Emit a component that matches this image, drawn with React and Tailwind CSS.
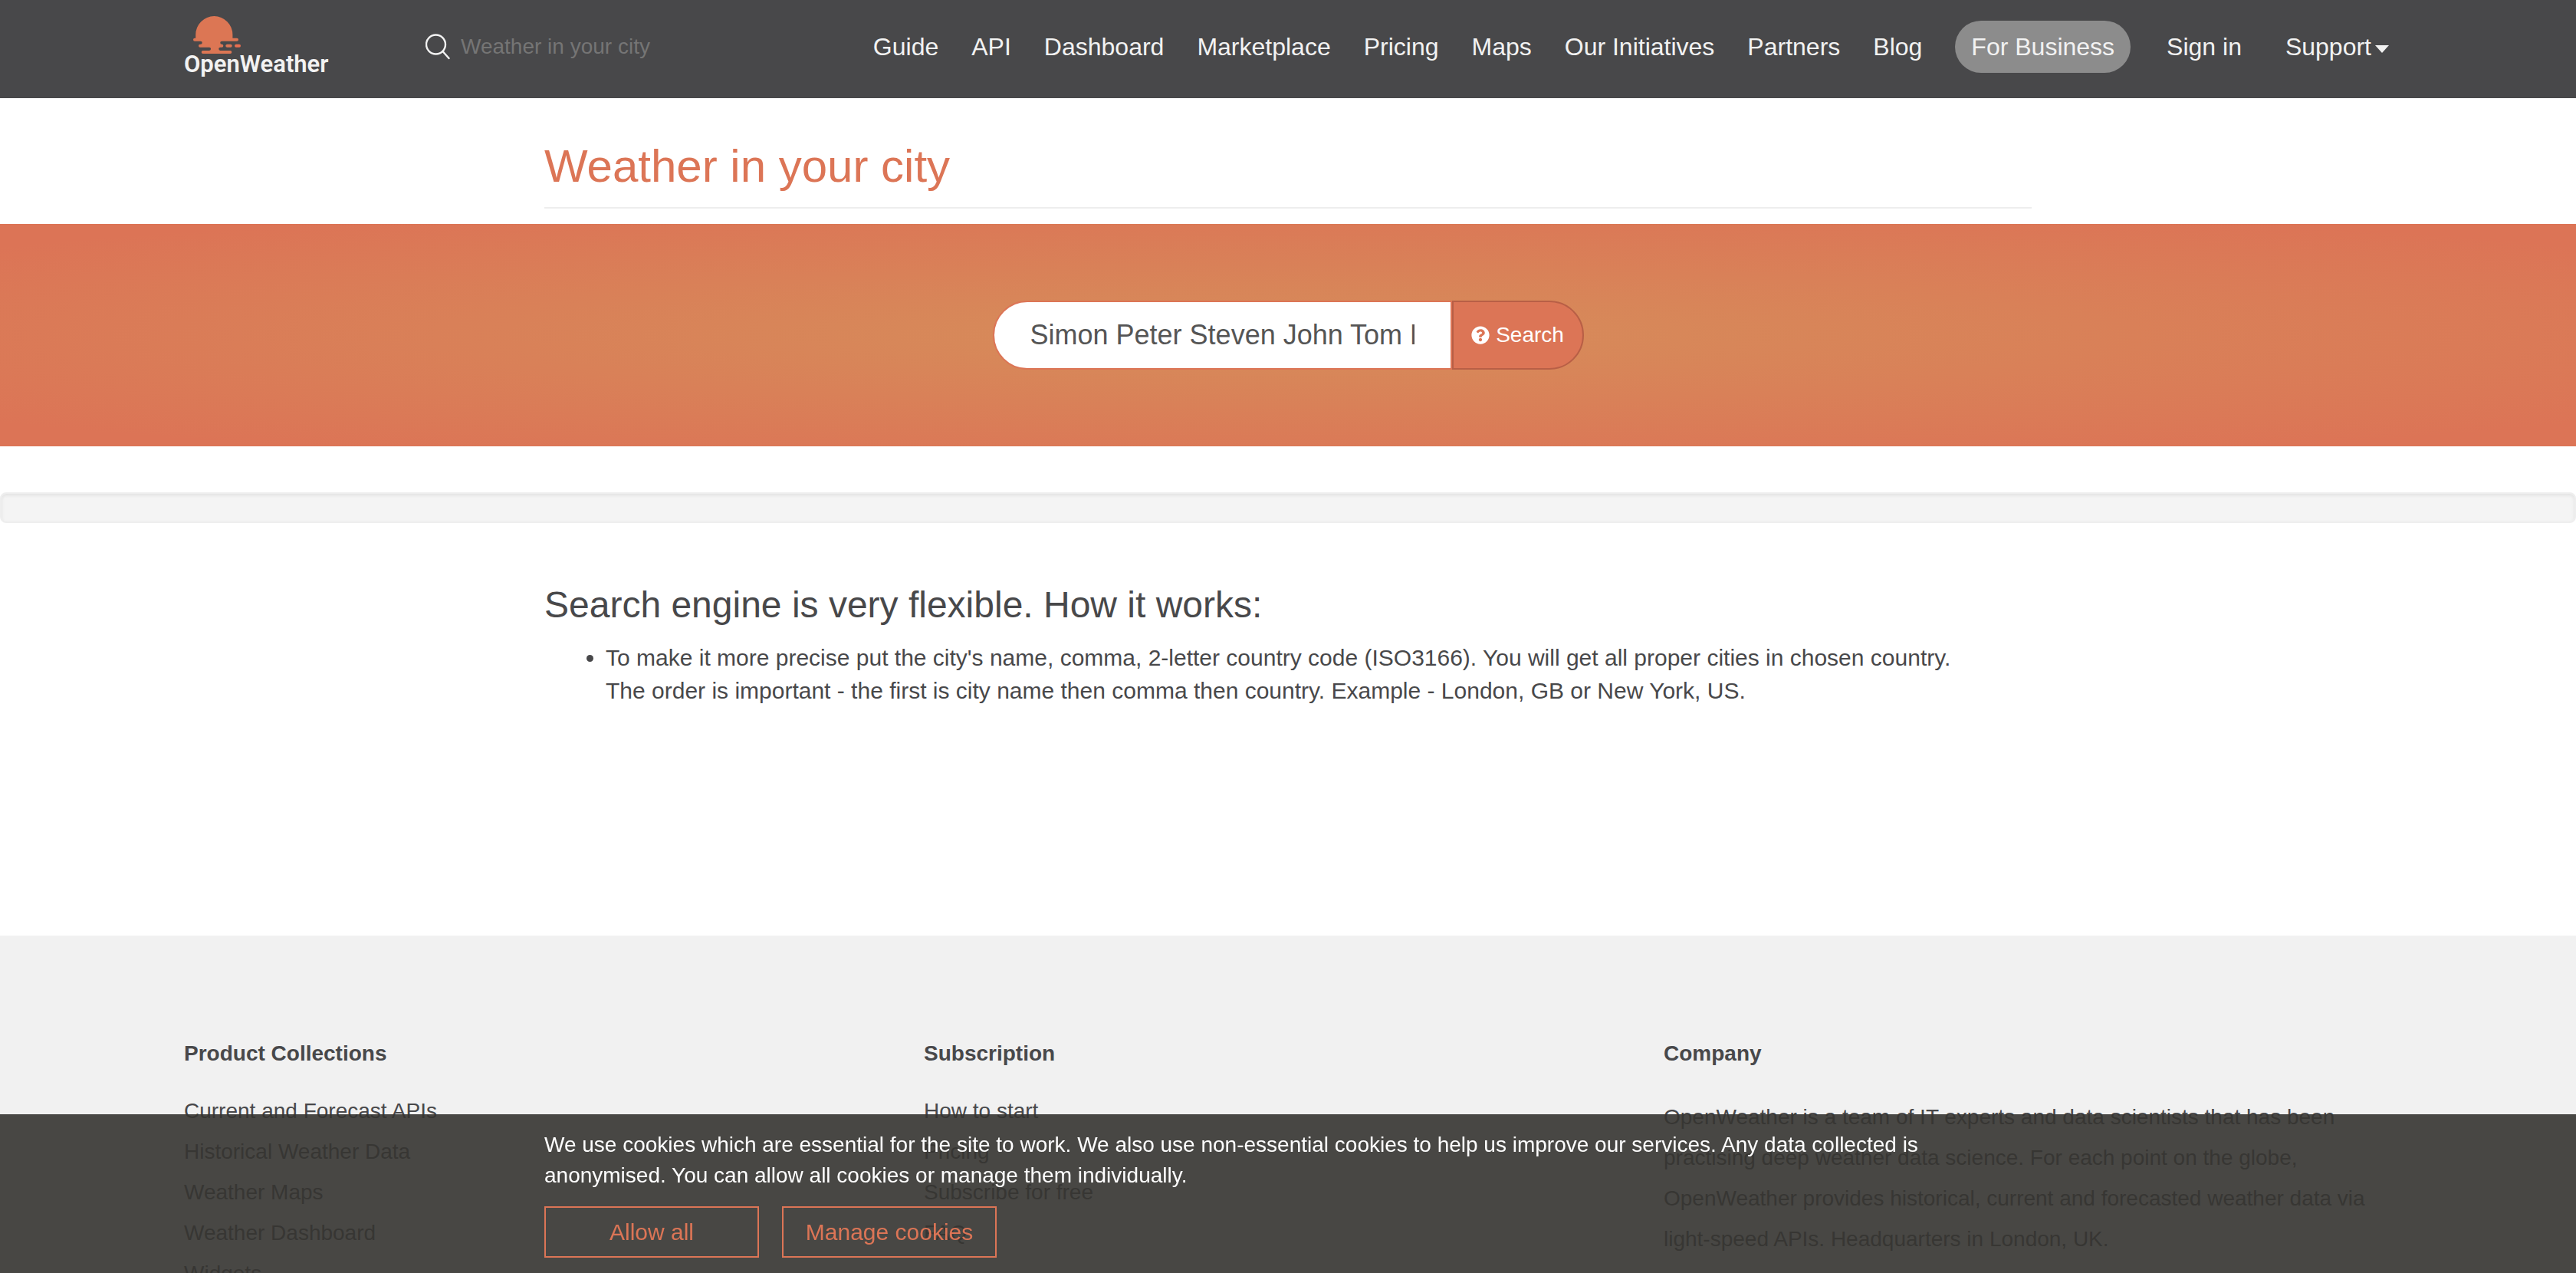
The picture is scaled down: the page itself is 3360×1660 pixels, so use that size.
import React from "react";
import { FaQuestionCircle } from "react-icons/fa";

const NAV = ["Guide", "API", "Dashboard", "Marketplace", "Pricing", "Maps", "Our Initiatives", "Partners", "Blog"];

const COLUMNS = [
  {
    title: "Product Collections",
    links: ["Current and Forecast APIs", "Historical Weather Data", "Weather Maps", "Weather Dashboard", "Widgets"],
  },
  { title: "Subscription", links: ["How to start", "Pricing", "Subscribe for free", "FAQ"] },
];

function Logo() {
  return (
    <a href="#home" aria-label="OpenWeather" className="flex w-[187px] shrink-0 flex-col pb-[3px]">
      <svg viewBox="0 0 187 49" className="h-[49px] w-[187px]" fill="#dc7654" aria-hidden="true">
        <path d="M15.2 28.7V24.2a24.1 24.1 0 0 1 48.2 0v4.5H69a2 2 0 0 1 0 4H49.3a2.05 2.05 0 0 0 0 4.1a2 2 0 0 1 0 4H47.3a2.05 2.05 0 0 0 0 4.1H60.3a2 2 0 0 1 0 4H24.7a2 2 0 0 1 0-4H33a2.05 2.05 0 0 0 0-4.1H21a2 2 0 0 1 0-4h.7a2.05 2.05 0 0 0 0-4.1H14a2 2 0 0 1 0-4z" />
        <rect x="54.3" y="36.8" width="8.4" height="4" rx="2" />
        <rect x="66" y="36.8" width="8" height="4" rx="2" fill="#e96e50" />
      </svg>
      <span className="font-['Roboto'] text-[31px] leading-7 font-semibold text-[#f2f2f2]">OpenWeather</span>
    </a>
  );
}

function Header() {
  return (
    <header className="flex h-32 items-center bg-[#48484a] px-[240px] pb-1.5">
      <Logo />
      <label className="ml-32 flex items-center gap-3.5">
        <svg viewBox="0 0 32 34" className="h-[34px] w-8" fill="none" stroke="#f2f2f2" strokeWidth="2.4" strokeLinecap="round" aria-hidden="true">
          <circle cx="13.5" cy="14" r="12.5" />
          <path d="M22.5 23l8 9" />
        </svg>
        <input
          type="text"
          aria-label="Weather in your city"
          placeholder="Weather in your city"
          className="w-[270px] bg-transparent text-[28px] leading-10 text-white outline-none placeholder:text-[#757575]"
        />
      </label>
      <nav className="ml-auto flex items-center text-[32px] leading-10 whitespace-nowrap text-[#f2f2f2]">
        <div className="flex gap-[43px]">
          {NAV.map((n) => (
            <a key={n} href="#nav">{n}</a>
          ))}
        </div>
        <a href="#business" className="ml-[43px] rounded-full bg-[#8c8c8c] px-[21px] py-3.5">For Business</a>
        <a href="#signin" className="ml-[47px]">Sign in</a>
        <button type="button" className="ml-[57px] flex items-center">
          Support
          <svg viewBox="0 0 18 10" className="mt-1.5 mr-1 ml-[5px] h-2.5 w-[18px]" fill="#f2f2f2" aria-hidden="true">
            <path d="M0 0h18l-9 10z" />
          </svg>
        </button>
      </nav>
    </header>
  );
}

function CookieBar() {
  return (
    <section aria-label="Cookies" className="fixed inset-x-0 bottom-0 bg-[rgba(53,52,49,0.9)] py-5">
      <div className="mx-auto max-w-[1940px]">
        <p className="text-[28px] leading-10 text-white">
          We use cookies which are essential for the site to work. We also use non-essential cookies to help us improve
          our services. Any data collected is anonymised. You can allow all cookies or manage them individually.
        </p>
        <div className="mt-5 flex gap-[30px] text-[30px] leading-10 text-[#dc7556]">
          <button type="button" className="h-[67px] w-[280px] border-2 border-[#dc7556]">Allow all</button>
          <button type="button" className="h-[67px] w-[280px] border-2 border-[#dc7556]">Manage cookies</button>
        </div>
      </div>
    </section>
  );
}

export default function App() {
  return (
    <div className="h-screen overflow-hidden bg-white font-['Liberation_Sans',Arial,sans-serif] text-[#48484a]">
      <Header />
      <main>
        <div className="mx-auto mb-5 max-w-[1940px] border-b-2 border-[#eeeeee] pt-14 pb-5">
          <h1 className="text-[60px] leading-[66px] text-[#dc7556]">Weather in your city</h1>
        </div>
        <form className="flex justify-center bg-[radial-gradient(ellipse_at_center,#d68d5a,#dc7456_90%)] py-[100px]">
          <input
            type="text"
            aria-label="Search city"
            defaultValue="Simon Peter Steven John Tom L"
            className="h-[90px] w-[599px] rounded-l-full border-2 border-[#dc7556] bg-white px-[47px] text-4xl text-[#555555] outline-none"
          />
          <button type="button" className="flex h-[90px] w-[172px] items-center justify-center gap-2 rounded-r-full border-2 border-[#b85f46] bg-[#dc7556] text-[28px] text-white">
            <FaQuestionCircle className="h-6 w-6" aria-hidden="true" />
            Search
          </button>
        </form>
        <div className="mt-[60px] h-10 rounded-lg border-2 border-[#eeeeee] bg-[#f4f4f4] shadow-[inset_0_2px_4px_rgba(0,0,0,0.08)]" />
        <section className="mx-auto mt-20 max-w-[1940px] pb-[298px]">
          <h3 className="text-5xl leading-[54px]">Search engine is very flexible. How it works:</h3>
          <ul className="mt-5 list-disc pl-20 text-[30px] leading-[43px]">
            <li>
              To make it more precise put the city's name, comma, 2-letter country code (ISO3166). You will get all
              proper cities in chosen country.
              <br />
              The order is important - the first is city name then comma then country. Example - London, GB or New York,
              US.
            </li>
          </ul>
        </section>
      </main>
      <footer className="grid grid-cols-3 gap-[15px] bg-[#f1f1f1] px-[240px] pt-[134px] pb-20 text-[28px] leading-[53px]">
        {COLUMNS.map((c) => (
          <div key={c.title}>
            <h4 className="leading-10 font-bold">{c.title}</h4>
            <ul className="mt-7">
              {c.links.map((l) => (
                <li key={l}>
                  <a href="#footer">{l}</a>
                </li>
              ))}
            </ul>
          </div>
        ))}
        <div>
          <h4 className="leading-10 font-bold">Company</h4>
          <p className="mt-9">
            OpenWeather is a team of IT experts and data scientists that has been practising deep weather data science.
            For each point on the globe, OpenWeather provides historical, current and forecasted weather data via
            light-speed APIs. Headquarters in London, UK.
          </p>
        </div>
      </footer>
      <CookieBar />
    </div>
  );
}
